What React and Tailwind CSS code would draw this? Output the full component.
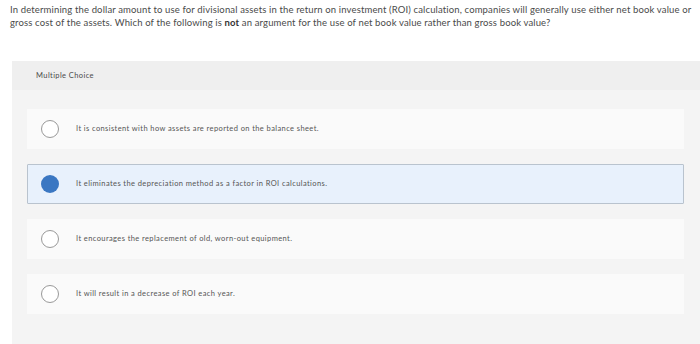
const options = [
  'It is consistent with how assets are reported on the balance sheet.',
  'It eliminates the depreciation method as a factor in ROI calculations.',
  'It encourages the replacement of old, worn-out equipment.',
  'It will result in a decrease of ROI each year.',
];

export default function App() {
  const selected = 1;

  return (
    <div className="h-[344px] w-[700px] overflow-hidden bg-white text-[#4a4a4a] font-['Lato',sans-serif]">
      <p className="px-[10px] pt-[3px] text-[9.5px] leading-[13px] tracking-[0.14px] whitespace-nowrap">
        In determining the dollar amount to use for divisional assets in the return on investment (ROI) calculation, companies will generally use either net book value or
        <br />
        gross cost of the assets. Which of the following is <b className="font-bold text-[#333]">not</b> an argument for the use of net book value rather than gross book value?
      </p>

      <div className="ml-[12px] mt-[32px] h-[400px] bg-[#f4f4f4]">
        <div className="flex h-[29px] items-center bg-[#efefef] pl-[24px] text-[7.5px] tracking-[0.4px] text-[#4a4a4a]">
          Multiple Choice
        </div>

        <div className="flex flex-col gap-[15px] pt-[19px] pl-[15px] pr-[16px]">
          {options.map((text, i) => {
            const isSel = i === selected;
            return (
              <div
                key={i}
                className={
                  isSel
                    ? 'flex h-[40px] items-center rounded-[1px] border border-[#b9c3ce] bg-[#e8f1fc] pl-[13px]'
                    : 'flex h-[40px] items-center border border-transparent bg-[#fafafa] pl-[13px]'
                }
              >
                {isSel ? (
                  <span className="h-[18px] w-[18px] shrink-0 rounded-full bg-[#3a77c2]" />
                ) : (
                  <span className="h-[18px] w-[18px] shrink-0 rounded-full border border-[#999] bg-white" />
                )}
                <span className="ml-[17px] text-[7.5px] tracking-[0.4px] text-[#555]">{text}</span>
              </div>
            );
          })}
        </div>
      </div>
    </div>
  );
}
